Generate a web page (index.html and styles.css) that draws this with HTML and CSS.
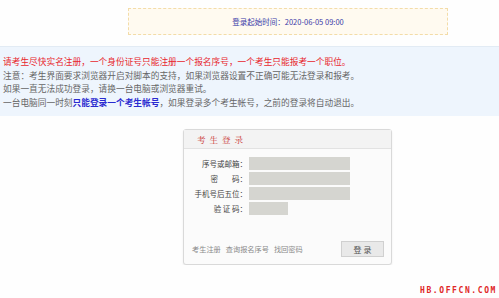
FILE: index.html
```html
<!DOCTYPE html>
<html lang="zh-CN">
<head>
    <meta charset="UTF-8">
    <meta name="viewport" content="width=device-width, initial-scale=1.0">
    <title>考生登录</title>
    <link rel="stylesheet" href="styles.css">
</head>
<body>
    <div class="time-box">登录起始时间：2020-06-05 09:00</div>

    <div class="notice">
        <p class="red">请考生尽快实名注册，一个身份证号只能注册一个报名序号，一个考生只能报考一个职位。</p>
        <p>注意：考生界面要求浏览器开启对脚本的支持，如果浏览器设置不正确可能无法登录和报考。</p>
        <p>如果一直无法成功登录，请换一台电脑或浏览器重试。</p>
        <p>一台电脑同一时刻<b class="blue">只能登录一个考生帐号</b>，如果登录多个考生帐号，之前的登录将自动退出。</p>
    </div>

    <div class="login-box">
        <div class="login-title">考生登录</div>
        <form class="login-form">
            <label for="sn">序号或邮箱：</label>
            <input type="text" id="sn">
            <label for="pwd">密<span class="gap"></span>码：</label>
            <input type="password" id="pwd">
            <label for="phone">手机号后五位：</label>
            <input type="text" id="phone">
            <label for="code">验 证 码：</label>
            <input type="text" id="code" class="short">
        </form>
        <div class="login-foot">
            <div class="links">
                <a href="#">考生注册</a>
                <a href="#">查询报名序号</a>
                <a href="#">找回密码</a>
            </div>
            <button type="button" class="login-btn">登 录</button>
        </div>
    </div>

    <div class="watermark">HB.OFFCN.COM</div>
</body>
</html>
```

FILE: styles.css
```css
body {
    margin: 0;
    padding: 8px 0 0 0;
    background-color: #fefefe;
    font-family: "Noto Sans CJK SC", "Noto Sans", sans-serif;
    color: #666;
}
.time-box {
    margin-left: 128px;
    width: 320px;
    height: 27px;
    box-sizing: border-box;
    border: 1px dashed #f3dca8;
    background-color: #fffaf0;
    color: #3b3ba8;
    font-size: 7.5px;
    display: flex;
    align-items: center;
    justify-content: center;
}
.notice {
    margin-top: 11px;
    height: 70px;
    box-sizing: border-box;
    padding: 8px 0 0 3px;
    background-color: #eef5fd;
    border-top: 1px solid #e2ebf4;
}
.notice p {
    margin: 0;
    font-size: 8.7px;
    line-height: 13.6px;
    white-space: nowrap;
}
.notice .red {
    color: #e8272d;
}
.notice .blue {
    color: #2a2ad0;
    font-weight: bold;
}
.login-box {
    margin: 13px 0 0 183px;
    width: 209px;
    height: 136px;
    box-sizing: border-box;
    border: 1px solid #d9d9d9;
    border-radius: 3px;
    background-color: #fbfbfb;
    box-shadow: 0 1px 2px rgba(0, 0, 0, 0.08);
    display: flex;
    flex-direction: column;
}
.login-title {
    height: 18px;
    border-bottom: 1px solid #e2e2e2;
    background-color: #f3f3f3;
    padding-left: 13px;
    font-family: "Noto Serif CJK SC", "Liberation Serif", serif;
    font-size: 8.5px;
    letter-spacing: 4px;
    line-height: 18px;
    color: #c9302c;
}
.login-form {
    margin: 8px 0 0 0;
    display: grid;
    grid-template-columns: 63px 101px;
    column-gap: 2px;
    row-gap: 2px;
}
.login-form label {
    text-align: right;
    font-size: 7.5px;
    line-height: 13px;
    color: #444;
    white-space: nowrap;
}
.login-form .gap {
    display: inline-block;
    width: 14px;
}
.login-form input {
    height: 13px;
    margin: 0;
    padding: 0;
    border: none;
    background-color: #d5d5d0;
}
.login-form input.short {
    width: 39px;
}
.login-foot {
    margin-top: auto;
    padding: 0 7px 7px 8px;
    display: flex;
    justify-content: space-between;
    align-items: center;
}
.links {
    display: flex;
    gap: 5px;
}
.links a {
    font-size: 7.2px;
    color: #8a8a8a;
    text-decoration: none;
}
.login-btn {
    width: 43px;
    height: 16px;
    padding: 0;
    border: 1px solid #d0d0d0;
    background-color: #e9e9e9;
    color: #555;
    font-family: "Noto Sans CJK SC", sans-serif;
    font-size: 8px;
    cursor: pointer;
}
.watermark {
    position: absolute;
    right: 2px;
    bottom: 3px;
    font-family: "DejaVu Sans Mono", monospace;
    font-weight: bold;
    font-size: 8px;
    letter-spacing: 1.6px;
    color: #e02828;
}
```
